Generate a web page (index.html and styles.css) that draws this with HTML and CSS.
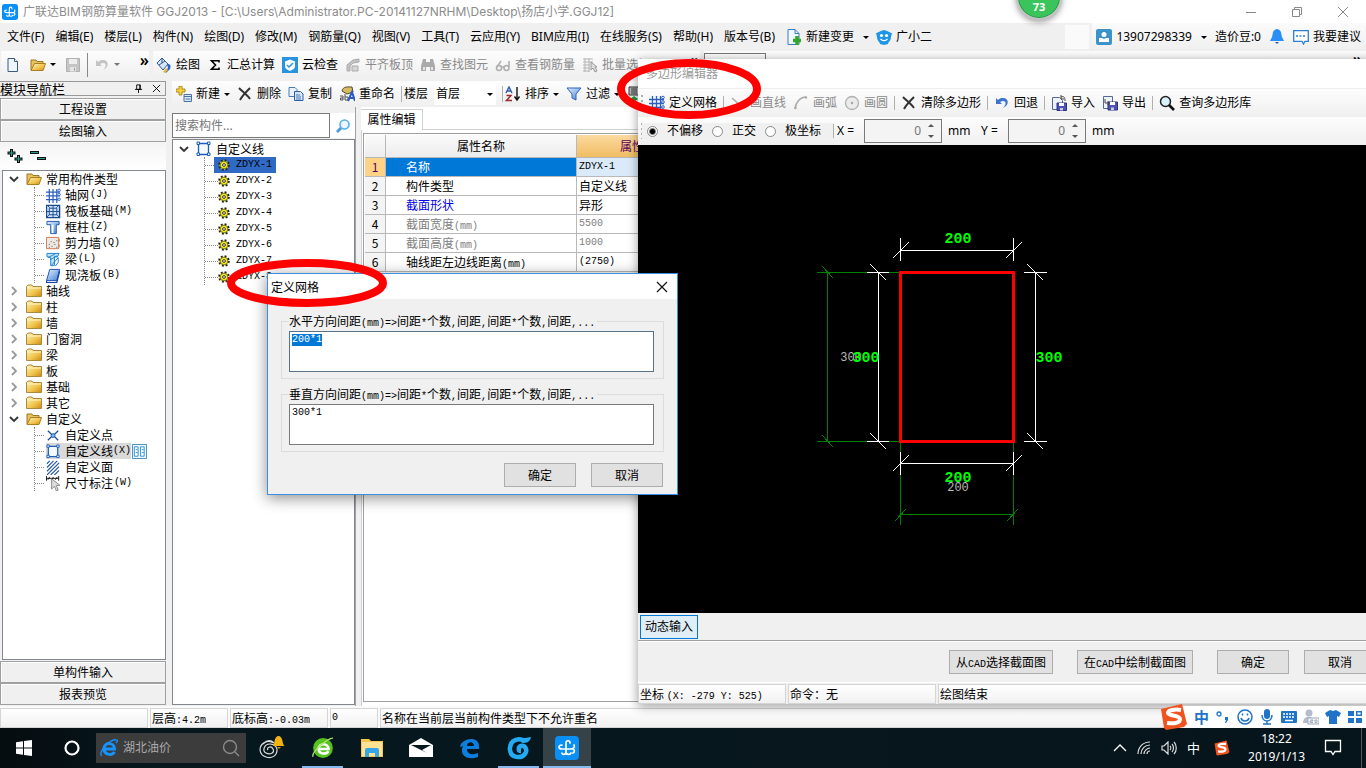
FILE: index.html
```html
<!DOCTYPE html>
<html lang="zh-CN">
<head>
<meta charset="utf-8">
<title>广联达BIM钢筋算量软件 GGJ2013</title>
<link rel="stylesheet" href="styles.css">
</head>
<body>
<svg class="defs" aria-hidden="true">
<defs>
<linearGradient id="gold" x1="0" y1="0" x2="1" y2="1"><stop offset="0" stop-color="#fff3b8"/><stop offset=".6" stop-color="#f1c24a"/><stop offset="1" stop-color="#c98912"/></linearGradient>
<linearGradient id="blu" x1="0" y1="0" x2="1" y2="1"><stop offset="0" stop-color="#e6f2ff"/><stop offset="1" stop-color="#3f7fd6"/></linearGradient>
<symbol id="logo" viewBox="0 0 24 24"><rect width="24" height="24" rx="4" fill="#0a8ff5"/><path d="M15 7c0-3-4-3-4 0v9c0 3-4 3-4 1M7 9c-4 0-4 4 0 4h10c3 0 3 3 1 4M11 16c0 3 4 3 5 1M15 13c4 0 5-2 4-4" fill="none" stroke="#fff" stroke-width="1.700" stroke-linecap="round"/></symbol>
<symbol id="new" viewBox="0 0 16 16"><path d="M3 1.500h6.500l3 3v10H3z" fill="#eef5fc" stroke="#3d5a80"/><path d="M9.500 1.500v3h3" fill="#fff" stroke="#3d5a80"/></symbol>
<symbol id="fopen" viewBox="0 0 16 16"><path d="M1 13V3h5l1 1.500h6V7" fill="#e8c25a" stroke="#9a7628"/><path d="M1 13.500 4.500 6.500H15.500L13 13.500z" fill="url(#gold)" stroke="#a87f22"/></symbol>
<symbol id="fold" viewBox="0 0 16 16"><path d="M.5 13.500v-10l1.500-1.500h4l1 1.500h8.500v10z" fill="url(#gold)" stroke="#a98a3e"/><path d="M1 5h14" stroke="#fff4c4"/></symbol>
<symbol id="save" viewBox="0 0 16 16"><path d="M1.500 1.500h13v13h-13z" fill="#c5c5c5" stroke="#b0b0b0"/><path d="M4 2h8v5H4z" fill="#eee"/><path d="M5 10h6v4.500H5z" fill="#e4e4e4"/><path d="M9 11h1v2.500H9z" fill="#999"/></symbol>
<symbol id="undo" viewBox="0 0 16 16"><path d="M2 3v6h6L6 7c5-3 8 1 3 6 7-3 6-11-1-10-2 0-3 1-4 2z" fill="currentColor"/></symbol>
<symbol id="paint" viewBox="0 0 16 16"><path d="M1 6 6 1l6 6-5 6z" fill="#d7e6f8" stroke="#31598f"/><path d="M3 8l6-4M6 1v5" stroke="#31598f"/><path d="M11 7c4 0 4 2 3 5l-4 4-1-2 3-3z" fill="#2667c9"/><path d="m7 15 3-4 2 2-3 3z" fill="#e8b93f"/></symbol>
<symbol id="sigma" viewBox="0 0 16 16"><path d="M12 5.500V3.700H4.500l4 4.300-4 4.300H12v-1.800" fill="none" stroke="#000" stroke-width="1.600"/></symbol>
<symbol id="cloud" viewBox="0 0 16 16"><path d="M0 0h16v16H0z" fill="#2a93dd"/><path d="M3 4.500 8 2.500l5 2V9c0 3-3 4-5 5-2-1-5-2-5-5z" fill="#fff"/><path d="m5 8 2 2 4-4" fill="none" stroke="#2a93dd" stroke-width="1.500"/></symbol>
<symbol id="align" viewBox="0 0 16 16"><path d="M2 8 8 3l6-1v3L8 6 5 9v5H2z" fill="#c3c3c3" stroke="#aaa"/><path d="M7 9h6v5H7z" fill="#d5d5d5" stroke="#aaa"/></symbol>
<symbol id="bino" viewBox="0 0 16 16"><path d="M3 2h3v3h4V2h3l2 7v5h-5v-4H6v4H1V9z" fill="#aaa"/><path d="M3 10h2v3H3zM11 10h2v3h-2z" fill="#e4e4e4"/></symbol>
<symbol id="glass" viewBox="0 0 16 16"><g fill="none" stroke="#b0b0b0" stroke-width="1.600"><circle cx="4" cy="11" r="2.500"/><circle cx="11.500" cy="11" r="2.500"/><path d="M6.500 10h2.500M2 10l4-6M14 10V4"/></g></symbol>
<symbol id="batch" viewBox="0 0 16 16"><path d="M1 2h10M1 5h10M1 8h7M1 11h7M1 14h7M3 1v14M7 1v14" stroke="#b5b5b5"/><path d="M9 5v8l2-2 2 4 2-1-2-4h2z" fill="#ddd" stroke="#999"/></symbol>
<symbol id="plusnew" viewBox="0 0 16 16"><path d="M3 0h3v3h3v3H6v3H3V6H0V3h3z" fill="#f6cf3a" stroke="#9c7b10" stroke-width=".8"/><path d="M8 8.500h7.500v7H8z" fill="#dce9f8" stroke="#49729f"/><path d="M8 10.500h7.500M9.500 13h5" stroke="#49729f"/></symbol>
<symbol id="x" viewBox="0 0 16 16"><path d="M2 2c4 4 8 7 11 11M13 2C9 6 5 10 3 14" fill="none" stroke="#333" stroke-width="2"/></symbol>
<symbol id="copy" viewBox="0 0 16 16"><path d="M1 1.500h6l2 2v7H1z" fill="#e9f2fd" stroke="#4c78b8"/><path d="M6.500 5.500h6l2.500 2.500v6.500H6.500z" fill="#d5e5fa" stroke="#2f5fa8"/><path d="M8 9h4M8 11h5M8 13h5" stroke="#4c78b8"/></symbol>
<symbol id="ren" viewBox="0 0 16 16"><path d="M3 5c1-5 6-4 10-4l1 5-6 2z" fill="#d6bb63" stroke="#554a28"/><path d="M1 10h3v4H1.500v-2H4M6 8v6h3v-3H6" fill="none" stroke="#555"/><path d="m9 15 4-9 3 9M11 12h4" fill="none" stroke="#2959c2" stroke-width="2"/></symbol>
<symbol id="az" viewBox="0 0 16 16"><path d="m1 7 3-6 3 6M2 5h4" fill="none" stroke="#315aa8" stroke-width="1.400"/><path d="M1.500 9.500H6l-4.500 5H7" fill="none" stroke="#9c2d2d" stroke-width="1.400"/><path d="M12 1v12M9.500 10.500 12 14l2.500-3.500" fill="none" stroke="#111" stroke-width="1.400"/></symbol>
<symbol id="fun" viewBox="0 0 16 16"><path d="M1 2h14L10 8v6l-4-2V8z" fill="url(#blu)" stroke="#2a63bd"/></symbol>
<symbol id="mag" viewBox="0 0 16 16"><path d="m6 10-4 4" stroke="#4a9be0" stroke-width="3"/><circle cx="9.500" cy="6.500" r="4.500" fill="#eaf6ff" stroke="#5aaeea" stroke-width="1.600"/></symbol>
<symbol id="pgup" viewBox="0 0 16 16"><path d="M2 1h10v8H2z" fill="#bbb" stroke="#333"/><path d="M4 3h6M4 5h6M4 7h6" stroke="#333"/><path d="m7 10 4 3-4 3-4-3z" fill="#1a9a3a"/></symbol>
<symbol id="grid" viewBox="0 0 16 16"><path d="M0 4.500h15M0 8.500h15M0 12.500h15M3.500 1v15M7.500 1v15M11.500 1v15" stroke="#2b5fbe" stroke-width="1.300"/><g fill="#fff" stroke="#2b5fbe"><circle cx="14" cy="2.500" r="1.300"/><circle cx="14" cy="7" r="1.300"/><circle cx="14" cy="12" r="1.300"/></g></symbol>
<symbol id="raft" viewBox="0 0 16 16"><path d="M.5 1.500h14v13H.5z" fill="#cfe3fb" stroke="#174a91" stroke-width="1.500"/><path d="M3.500 4.500h8v7h-8zM1 1l3 3M14 1l-3 3M1 14l3-3M14 14l-3-3M3.500 8h8M7.500 1v13M0 8h4M11 8h4" fill="none" stroke="#174a91"/></symbol>
<symbol id="col" viewBox="0 0 16 16"><path d="M1 1.500h13V5H11v9.500H5V5H1z" fill="url(#blu)" stroke="#1f57a8"/><path d="M7 5v9" stroke="#fff" stroke-width="2"/></symbol>
<symbol id="wall" viewBox="0 0 16 16"><path d="M.5 1.500h13v12H.5z" fill="#ece9e4" stroke="#d0784c"/><path d="M3 9h1m2 2h1m2-2h1m1 3h1M3 12h1m4-5h1m2-2h1M5 6h1" stroke="#555"/><path d="M14 3v3M14 9v3" stroke="#c2693c"/></symbol>
<symbol id="beam" viewBox="0 0 16 16"><path d="M1 1.500h13l-2 4-3-1v10H5V6L1 5z" fill="#bfe2fb" stroke="#197fca"/><path d="m2 6 8-4M5 8l7-4M6 14l7-8v5l-3 4" fill="none" stroke="#197fca"/></symbol>
<symbol id="slab" viewBox="0 0 16 16"><path d="M4 1.500h10.500l-3 12H.5z" fill="url(#blu)" stroke="#174aa5"/><path d="M.5 13.500v2h11l3-12" fill="none" stroke="#174aa5" stroke-width="1.400"/></symbol>
<symbol id="pt" viewBox="0 0 16 16"><path d="m2 3 4 4M13 3 9 7M2 13l4-4M13 13 9 9" stroke="#1f4f9d" stroke-width="1.400"/><circle cx="7.500" cy="8" r="2" fill="#7ac0ff" stroke="#1f4f9d"/></symbol>
<symbol id="poly" viewBox="0 0 16 16"><path d="M2.500 2.500h10v11h-10z" fill="#f4f8ff" stroke="#1c5dc0" stroke-width="1.300"/><g fill="#fff" stroke="#1c5dc0"><path d="M1 1h2.500v2.500H1zM11.500 1H14v2.500h-2.500zM1 12h2.500v2.500H1zM11.500 12H14v2.500h-2.500z"/></g></symbol>
<symbol id="hatch" viewBox="0 0 16 16"><path d="m1 4 3-3M1 8l7-7M1 12l11-11M1 16 14 3M5 16l9-9M9 16l5-5" stroke="#24579f" stroke-width="1.200"/></symbol>
<symbol id="dim" viewBox="0 0 16 16"><path d="M.5 0v5M13.500 0v5M1 2.500h12M4 1l-2 3M8 1l-2 3M12 1l-2 3" stroke="#111"/><path d="M6 3v11l3-3 2 5 2-1-2-5h4z" fill="#ddd" stroke="#888"/></symbol>
<symbol id="book" viewBox="0 0 16 16"><path d="M.5.5h15v15H.5z" fill="#eff8ff" stroke="#3d8bbb"/><path d="M2.500 3h4v10h-4zM9 3h4v10H9zM4 6h2M4 9h2M10.500 6h2M10.500 9h2" fill="#fff" stroke="#2c8ed0"/></symbol>
<symbol id="gear" viewBox="0 0 12 12"><circle cx="6" cy="6" r="4.600" fill="#f5ee14" stroke="#222" stroke-width="2.400" stroke-dasharray="1.800 1.813"/><circle cx="6" cy="6" r="3.800" fill="#f5ee14" stroke="#554" stroke-width=".7"/><circle cx="6" cy="6" r="1.400" fill="#fff" stroke="#222" stroke-width=".9"/></symbol>
<symbol id="arrd" viewBox="0 0 10 8"><path d="m1 2 4 4 4-4" fill="none" stroke="#333" stroke-width="1.800"/></symbol>
<symbol id="arrr" viewBox="0 0 10 10"><path d="m3 1 4 4-4 4" fill="none" stroke="#999" stroke-width="1.800"/></symbol>
<symbol id="line" viewBox="0 0 16 16"><path d="m2 3 11 10" stroke="#aaa" stroke-width="1.500"/></symbol>
<symbol id="arc" viewBox="0 0 16 16"><path d="M2 14C3 6 8 2 13 2" fill="none" stroke="#aaa" stroke-width="1.500"/><circle cx="2.500" cy="13" r="1.200" fill="#aaa"/><circle cx="13" cy="2.500" r="1.200" fill="#aaa"/></symbol>
<symbol id="circ" viewBox="0 0 16 16"><circle cx="8" cy="8" r="6.500" fill="#ececec" stroke="#b0b0b0" stroke-width="1.300"/><circle cx="8" cy="8" r="1.300" fill="#aaa"/></symbol>
<symbol id="imp" viewBox="0 0 16 16"><path d="M1.500 2.500h7l3 3v9h-10z" fill="#eef3fb" stroke="#546a94"/><path d="M6 8h9.500v7.500H6z" fill="#4c53b5" stroke="#2c3180"/><path d="M8 8h5v3H8z" fill="#fff"/><path d="M9 13h3v2.500H9z" fill="#ccd"/><path d="M10 2c3-1 4 0 4 4M10 0v4h3" fill="none" stroke="#444"/></symbol>
<symbol id="exp" viewBox="0 0 16 16"><path d="M1.500 1.500h9v12h-9z" fill="#eef3fb" stroke="#546a94"/><path d="M6 7h9.500v8H6z" fill="#4c53b5" stroke="#2c3180"/><path d="M8 7h5v3H8z" fill="#fff"/><path d="M9 12.500h3V15H9z" fill="#ccd"/><path d="M3 4v4h4M5.500 6l2 2-2 2" fill="none" stroke="#444"/></symbol>
<symbol id="find" viewBox="0 0 16 16"><circle cx="6.500" cy="6.500" r="5" fill="#d9f3fa" stroke="#222" stroke-width="1.500"/><path d="m10 10 5 5" stroke="#111" stroke-width="2.600"/></symbol>
<symbol id="sogou" viewBox="0 0 28 28"><path d="m1 6 21-5 5 20-3 3-18 3-2-2z" fill="#f0541e"/><path d="M21 7c-6-1-13 0-13 3s12 2 12 6-6 5-13 4" fill="none" stroke="#fff" stroke-width="4"/></symbol>
<symbol id="ie" viewBox="0 0 20 20"><path d="M6 11h9.500c0-7-10-7-10.500-1-.5 7 8 8 10.500 4" fill="none" stroke="currentColor" stroke-width="3"/><path d="M3 18C-2 15 11 0 18 2c1 1 0 2-1 3" fill="none" stroke="currentColor" stroke-width="1.300"/></symbol>
</defs>
</svg>

<div class="screen">
<header class="titlebar">
  <svg class="i16"><use href="#logo"/></svg>
  <h1>广联达BIM钢筋算量软件 GGJ2013 - [C:\Users\Administrator.PC-20141127NRHM\Desktop\扬店小学.GGJ12]</h1>
  <div class="winbtns">
    <button aria-label="最小化"><svg viewBox="0 0 12 12"><path d="M1 6.500h10"/></svg></button>
    <button aria-label="还原"><svg viewBox="0 0 12 12"><path d="M1.500 3.500h7v7h-7zM3.500 3V1.500h7v7H9"/></svg></button>
    <button aria-label="关闭"><svg viewBox="0 0 12 12"><path d="m1 1 10 10M11 1 1 11"/></svg></button>
  </div>
</header>

<nav class="menubar">
  <button>文件(F)</button><button>编辑(E)</button><button>楼层(L)</button><button>构件(N)</button><button>绘图(D)</button><button>修改(M)</button><button>钢筋量(Q)</button><button>视图(V)</button><button>工具(T)</button><button>云应用(Y)</button><button>BIM应用(I)</button><button>在线服务(S)</button><button>帮助(H)</button><button>版本号(B)</button>
  <button class="tb"><svg class="i16" viewBox="0 0 16 16"><path d="M2 .5h7l4 4v11H2z" fill="#eff7ff" stroke="#3b7fbf"/><path d="M9 .5v4h4" fill="none" stroke="#3b7fbf"/><path d="M11 7v9M7 11.500h8" stroke="#35a629" stroke-width="3.500"/></svg>新建变更<i class="car"></i></button>
  <button class="tb"><svg class="i16" viewBox="0 0 16 16"><path d="M0 4c2 0 3-2 8-3 5 1 6 3 8 3l-1 4c0 4-3 5-3 7l-4 1-4-1c0-2-3-3-3-7z" fill="#1e96e8"/><circle cx="5.500" cy="6.500" r="1.600" fill="#fff"/><circle cx="10.500" cy="6.500" r="1.600" fill="#fff"/><path d="M4.500 10c2 2 5 2 7 0" fill="none" stroke="#fff" stroke-width="1.300"/></svg>广小二</button>
  <div class="stub"></div>
  <div class="account">
    <button class="tb"><svg class="i16" viewBox="0 0 16 16"><rect width="16" height="16" rx="2" fill="#3b93c9"/><circle cx="8" cy="5.500" r="2.500" fill="#fff"/><path d="M3 13V9h3l2 1 2-1h3v4z" fill="#fff"/></svg>13907298339<i class="car"></i></button>
    <span>造价豆:0</span>
    <button aria-label="通知"><svg class="i16" viewBox="0 0 16 16"><path d="M8 0c5 1 4 5 5 8l2 4H1l2-4C4 5 3 1 8 0z" fill="#2a8ff7"/><path d="M6 13h4l-2 2z" fill="#1a5fb4"/></svg></button>
    <button class="tb"><svg class="i16" viewBox="0 0 16 16"><path d="M.7 1.700h14.600v10.600H12L10.500 15 9 12.300H.7z" fill="#fff" stroke="#2a7fd6" stroke-width="1.300"/><path d="M3 7h10" stroke="#2a7fd6" stroke-width="1.500" stroke-dasharray="2 1.500"/></svg>我要建议</button>
  </div>
</nav>

<div class="toolbars">
  <div class="bar file">
    <button aria-label="新建"><svg class="i16"><use href="#new"/></svg></button>
    <button class="tb" aria-label="打开"><svg class="i16"><use href="#fopen"/></svg><i class="car"></i></button>
    <button aria-label="保存"><svg class="i16"><use href="#save"/></svg></button>
    <i class="sep"></i>
    <button class="tb off" aria-label="撤销"><svg class="i16"><use href="#undo"/></svg><i class="car"></i></button>
    <b class="more">»</b>
  </div>
  <div class="bar draw">
    <button class="tb"><svg class="i16"><use href="#paint"/></svg>绘图</button>
    <button class="tb"><svg class="i16"><use href="#sigma"/></svg>汇总计算</button>
    <button class="tb"><svg class="i16"><use href="#cloud"/></svg>云检查</button>
    <button class="tb off"><svg class="i16"><use href="#align"/></svg>平齐板顶</button>
    <button class="tb off"><svg class="i16"><use href="#bino"/></svg>查找图元</button>
    <button class="tb off"><svg class="i16"><use href="#glass"/></svg>查看钢筋量</button>
    <button class="tb off"><svg class="i16"><use href="#batch"/></svg>批量选择</button>
    <b class="more">»</b>
  </div>
  <div class="bar views">
    <button class="viewbox" aria-label="视图"></button>
    <b class="more">»</b>
  </div>
</div>

<main class="work">
  <aside class="nav">
    <h2 class="navhead">模块导航栏<span><svg viewBox="0 0 10 10"><path d="M3 1h4v5H3zM1 6h8M5 6v4M6.500 1v5"/></svg><svg viewBox="0 0 10 10"><path d="m1 1 8 8M9 1 1 9"/></svg></span></h2>
    <button class="navbtn">工程设置</button>
    <button class="navbtn">绘图输入</button>
    <div class="navtools"><button aria-label="展开"><svg viewBox="0 0 16 16"><path d="M4.500 1v8M.5 5h8M11.500 7v8M7.500 11h8" stroke="#111" stroke-width="3"/><path d="M4.500 2v6M1.500 5h6M11.500 8v6M8.500 11h6" stroke="#2b9c8c"/></svg></button><button aria-label="折叠"><svg viewBox="0 0 16 16"><path d="M0 4.500h9M7 10.500h9" stroke="#111" stroke-width="3"/><path d="M1 4.500h7M8 10.500h7" stroke="#2b9c8c"/></svg></button></div>
    <ul class="tree types">
      <li><span class="row"><svg class="ar"><use href="#arrd"/></svg><svg class="i16"><use href="#fopen"/></svg>常用构件类型</span>
        <ul class="kids">
          <li><svg class="i16"><use href="#grid"/></svg>轴网<span class="m">(J)</span></li>
          <li><svg class="i16"><use href="#raft"/></svg>筏板基础<span class="m">(M)</span></li>
          <li><svg class="i16"><use href="#col"/></svg>框柱<span class="m">(Z)</span></li>
          <li><svg class="i16"><use href="#wall"/></svg>剪力墙<span class="m">(Q)</span></li>
          <li><svg class="i16"><use href="#beam"/></svg>梁<span class="m">(L)</span></li>
          <li><svg class="i16"><use href="#slab"/></svg>现浇板<span class="m">(B)</span></li>
        </ul></li>
      <li><span class="row"><svg class="ar"><use href="#arrr"/></svg><svg class="i16"><use href="#fold"/></svg>轴线</span></li>
      <li><span class="row"><svg class="ar"><use href="#arrr"/></svg><svg class="i16"><use href="#fold"/></svg>柱</span></li>
      <li><span class="row"><svg class="ar"><use href="#arrr"/></svg><svg class="i16"><use href="#fold"/></svg>墙</span></li>
      <li><span class="row"><svg class="ar"><use href="#arrr"/></svg><svg class="i16"><use href="#fold"/></svg>门窗洞</span></li>
      <li><span class="row"><svg class="ar"><use href="#arrr"/></svg><svg class="i16"><use href="#fold"/></svg>梁</span></li>
      <li><span class="row"><svg class="ar"><use href="#arrr"/></svg><svg class="i16"><use href="#fold"/></svg>板</span></li>
      <li><span class="row"><svg class="ar"><use href="#arrr"/></svg><svg class="i16"><use href="#fold"/></svg>基础</span></li>
      <li><span class="row"><svg class="ar"><use href="#arrr"/></svg><svg class="i16"><use href="#fold"/></svg>其它</span></li>
      <li><span class="row"><svg class="ar"><use href="#arrd"/></svg><svg class="i16"><use href="#fopen"/></svg>自定义</span>
        <ul class="kids">
          <li><svg class="i16"><use href="#pt"/></svg>自定义点</li>
          <li><span class="cur"><svg class="i16"><use href="#poly"/></svg>自定义线<span class="m">(X)</span></span><svg class="i16 bk"><use href="#book"/></svg></li>
          <li><svg class="i16"><use href="#hatch"/></svg>自定义面</li>
          <li><svg class="i16"><use href="#dim"/></svg>尺寸标注<span class="m">(W)</span></li>
        </ul></li>
    </ul>
    <button class="navbtn">单构件输入</button>
    <button class="navbtn">报表预览</button>
  </aside>

  <section class="content">
    <div class="bar comp">
      <button class="tb"><svg class="i16"><use href="#plusnew"/></svg>新建<i class="car"></i></button>
      <button class="tb"><svg class="i16"><use href="#x"/></svg>删除</button>
      <button class="tb"><svg class="i16"><use href="#copy"/></svg>复制</button>
      <button class="tb"><svg class="i16"><use href="#ren"/></svg>重命名</button>
      <i class="sep"></i>
      <label class="lbl" for="floor">楼层</label>
      <span class="floor"><select id="floor"><option>首层</option></select><i class="car"></i></span>
      <i class="sep"></i>
      <button class="tb"><svg class="i16"><use href="#az"/></svg>排序<i class="car"></i></button>
      <button class="tb"><svg class="i16"><use href="#fun"/></svg>过滤<i class="car"></i></button>
      <button class="tb" aria-label="从其他楼层复制构件"><svg class="i16"><use href="#pgup"/></svg></button>
    </div>
    <div class="cols">
      <div class="list">
        <div class="search"><input type="text" placeholder="搜索构件..." aria-label="搜索构件"><button aria-label="搜索"><svg class="i16"><use href="#mag"/></svg></button></div>
        <ul class="tree comps">
          <li><span class="row"><svg class="ar"><use href="#arrd"/></svg><svg class="i16"><use href="#poly"/></svg>自定义线</span>
            <ul class="kids m">
              <li><span class="cur"><svg class="g"><use href="#gear"/></svg>ZDYX-1</span></li>
              <li><svg class="g"><use href="#gear"/></svg>ZDYX-2</li>
              <li><svg class="g"><use href="#gear"/></svg>ZDYX-3</li>
              <li><svg class="g"><use href="#gear"/></svg>ZDYX-4</li>
              <li><svg class="g"><use href="#gear"/></svg>ZDYX-5</li>
              <li><svg class="g"><use href="#gear"/></svg>ZDYX-6</li>
              <li><svg class="g"><use href="#gear"/></svg>ZDYX-7</li>
              <li><svg class="g"><use href="#gear"/></svg>ZDYX-8</li>
            </ul></li>
        </ul>
      </div>
      <div class="props">
        <div class="tabs"><button>属性编辑</button></div>
        <div class="page"><div class="sheet">
          <table>
            <colgroup><col class="c1"><col class="c2"><col></colgroup>
            <thead><tr><th></th><th>属性名称</th><th class="hot"><span>属性值</span></th></tr></thead>
            <tbody>
              <tr class="on"><th>1</th><td>名称</td><td class="m">ZDYX-1</td></tr>
              <tr><th>2</th><td>构件类型</td><td>自定义线</td></tr>
              <tr><th>3</th><td class="key">截面形状</td><td>异形</td></tr>
              <tr class="dimd"><th>4</th><td>截面宽度<span class="m">(mm)</span></td><td class="m">5500</td></tr>
              <tr class="dimd"><th>5</th><td>截面高度<span class="m">(mm)</span></td><td class="m">1000</td></tr>
              <tr><th>6</th><td>轴线距左边线距离<span class="m">(mm)</span></td><td class="m">(2750)</td></tr>
            </tbody>
          </table>
        </div></div>
      </div>
    </div>
  </section>
</main>

<footer class="status">
  <span class="s1"></span><span class="s2">层高<span class="m">:4.2m</span></span><span class="s3">底标高<span class="m">:-0.03m</span></span><span class="s4 m">0</span><span class="s5">名称在当前层当前构件类型下不允许重名</span>
</footer>

<div class="taskbar">
  <button aria-label="开始"><svg width="16" height="16" viewBox="0 0 16 16"><path d="M0 2.300 7 1.300v6.300H0zM8 1.100 16 0v7.600H8zM0 8.500h7v6.300l-7-1zM8 8.500h8V16l-8-1.100z" fill="#fff"/></svg></button>
  <button aria-label="Cortana"><svg width="16" height="16" viewBox="0 0 16 16"><circle cx="8" cy="8" r="6.500" fill="none" stroke="#fff" stroke-width="2.200"/></svg></button>
  <label class="find"><svg class="eb"><use href="#ie"/></svg><input type="text" value="湖北油价" aria-label="搜索网页"><svg width="18" height="18" viewBox="0 0 18 18"><g fill="none" stroke="#8a8a8a" stroke-width="1.400"><circle cx="8" cy="8" r="6.500"/><path d="m13 13 4 4"/></g></svg></label>
  <button aria-label="助手"><svg width="28" height="28" viewBox="0 0 28 28"><path d="M16 9C10 5 2 9 2 16c1 8 12 10 16 4 3-6-1-10-6-10-6 0-8 7-4 9s9 0 7-4-7-1-5 1M5 10c4-4 8-4 11-1" fill="none" stroke="#ddd" stroke-width="1.200"/><path d="M15 12c1-1 1-2 1.500-5 .5-3 2-5 4-5s3.500 2 4 5c.5 3 1 4 2 5z" fill="#f0b40c"/><path d="M19 13h4l-2 2z" fill="#d08a00"/></svg></button>
  <button class="run g360" aria-label="360浏览器"><svg width="22" height="22" viewBox="0 0 20 20"><circle cx="10" cy="10" r="9" fill="#57c21d"/><path d="M6 11h9c0-6-9-6-9 0 0 5 7 5 9 2" fill="none" stroke="#fff" stroke-width="2.300"/><path d="M1 18C-1 14 14 1 19 1" fill="none" stroke="#a5e26b" stroke-width="1.300"/></svg></button>
  <button aria-label="文件资源管理器"><svg width="22" height="20" viewBox="0 0 22 20"><path d="M0 1h8l2 2h12v16H0z" fill="#f6c64d"/><path d="M1 4h20v14H1z" fill="#ffe294"/><path d="M4 19v-7q0-2 2-2h10q2 0 2 2v7h-4v-4H8v4z" fill="#35a6e6"/></svg></button>
  <button aria-label="邮件"><svg width="24" height="20" viewBox="0 0 24 20"><path d="M0 7 12 0l12 7v12H0z" fill="#fff"/><path d="M2 7h20l-9 5 5 3z" fill="#06161c"/></svg></button>
  <button class="edge" aria-label="Edge"><svg width="22" height="22" viewBox="0 0 22 22"><path d="M1 10C2 1 20-2 20 9v3H8c0 6 7 6 11 4v4C7 24 0 17 4 9c-1 0-2 1-3 1zm7-1h7c0-5-7-5-7 0z" fill="currentColor"/></svg></button>
  <button class="run" aria-label="广联达G"><svg width="26" height="26" viewBox="0 0 26 26"><path d="M17 5C9 2 3 8 4 15c1 8 11 9 15 4 3-4 0-9-4-8-3 1-3 5 0 5" fill="none" stroke="#24a9f4" stroke-width="4.500"/><path d="M13 3c4 0 8 0 12-1-1 5-4 6-9 6z" fill="#24a9f4"/></svg></button>
  <button class="run now" aria-label="GGJ2013"><svg width="24" height="24"><use href="#logo"/></svg></button>
  <div class="tray">
    <svg width="14" height="14" viewBox="0 0 14 14"><path d="m1 10 6-6 6 6" fill="none" stroke="#fff" stroke-width="1.300"/></svg>
    <svg width="14" height="14" viewBox="0 0 14 14"><path d="M1 13C1 6 6 1 13 1M4 13c0-5 4-9 9-9M7 13c0-3 3-6 6-6M10 13c0-2 1-3 3-3" fill="none" stroke="#ddd" stroke-width="1.200"/></svg>
    <svg width="16" height="14" viewBox="0 0 16 14"><path d="M1 5h2l4-4v12L3 9H1zM9 5c1 1 1 3 0 4M11 3c2 2 2 6 0 8M13 1c3 3 3 9 0 12" fill="none" stroke="#ddd" stroke-width="1.200"/></svg>
    <span class="zh">中</span>
    <svg width="16" height="16"><use href="#sogou"/></svg>
    <time>18:22<br>2019/1/13</time>
    <svg width="18" height="18" viewBox="0 0 18 18"><path d="M1.500 1.500h15v11H11l-2 3-2-3H1.500z" fill="none" stroke="#fff" stroke-width="1.300"/></svg>
    <i class="desk"></i>
  </div>
</div>

<section class="editor">
  <h2>多边形编辑器</h2>
  <div class="bar">
    <i class="grip"></i>
    <button class="tb"><svg class="i16"><use href="#grid"/></svg>定义网格</button><i class="sep"></i>
    <button class="tb off"><svg class="i16"><use href="#line"/></svg>画直线</button>
    <button class="tb off"><svg class="i16"><use href="#arc"/></svg>画弧</button>
    <button class="tb off"><svg class="i16"><use href="#circ"/></svg>画圆</button><i class="sep"></i>
    <button class="tb"><svg class="i16"><use href="#x"/></svg>清除多边形</button><i class="sep"></i>
    <button class="tb"><svg class="i16 back"><use href="#undo"/></svg>回退</button><i class="sep"></i>
    <button class="tb"><svg class="i16"><use href="#imp"/></svg>导入</button>
    <button class="tb"><svg class="i16"><use href="#exp"/></svg>导出</button><i class="sep"></i>
    <button class="tb"><svg class="i16"><use href="#find"/></svg>查询多边形库</button>
  </div>
  <div class="bar opts">
    <i class="grip"></i>
    <div class="radios">
      <label><input type="radio" name="off" checked>不偏移</label>
      <label><input type="radio" name="off">正交</label>
      <label><input type="radio" name="off">极坐标</label>
    </div>
    <i class="sep"></i>
    <label class="co" for="ox">X =</label><span class="spin"><input id="ox" type="text" value="0"><span><button aria-label="X 增加"></button><button class="dn" aria-label="X 减少"></button></span></span><span class="mm">mm</span>
    <label class="co" for="oy">Y =</label><span class="spin"><input id="oy" type="text" value="0"><span><button aria-label="Y 增加"></button><button class="dn" aria-label="Y 减少"></button></span></span><span class="mm">mm</span>
  </div>
  <div class="canvas">
    <svg width="728" height="468" viewBox="638 145 728 468">
      <g stroke="#008000" fill="none" shape-rendering="crispEdges">
        <path d="M827.500 272v170M817 272.500h83M817 441.500h83M900.500 442v83M1013.500 442v83M900 514.500h114"/>
        <path d="m822 266 11 12M822 435l11 12M895 521l11-12M1007 521l11-12"/>
      </g>
      <g stroke="#fff" fill="none" shape-rendering="crispEdges">
        <path d="M900 250.500h114M900.500 238v23M1013.500 238v23M878.500 272v170M867 272.500h22M867 441.500h22M1035.500 272v170M1024 272.500h23M1024 441.500h23M900 463.500h114M900.500 452v23M1013.500 452v23"/>
        <path d="m893 258 16-16M1006 258l16-16M870 264l16 16M870 433l16 16M1027 264l16 16M1027 433l16 16M893 471l16-16M1006 471l16-16"/>
      </g>
      <rect x="900.500" y="272.500" width="113" height="169" fill="none" stroke="#f00" stroke-width="3"/>
      <g class="ref"><text x="851" y="361">300</text><text x="958" y="491">200</text></g>
      <g class="dims"><text x="958" y="243">200</text><text x="866" y="362">300</text><text x="1049" y="362">300</text><text x="958" y="482">200</text></g>
    </svg>
  </div>
  <div class="dyn"><button>动态输入</button></div>
  <div class="acts"><button class="pb">从<span class="m">CAD</span>选择截面图</button><button class="pb">在<span class="m">CAD</span>中绘制截面图</button><div><button class="pb w">确定</button><button class="pb w">取消</button></div></div>
  <div class="est"><span>坐标 <span class="m">(X: -279 Y: 525)</span></span><span>命令：无</span><span>绘图结束</span></div>
</section>

<form class="dialog" role="dialog" aria-labelledby="dt">
  <header><h2 id="dt">定义网格</h2><button type="button" aria-label="关闭"><svg width="12" height="12" viewBox="0 0 12 12"><path d="m1 1 10 10M11 1 1 11" stroke="#111" stroke-width="1.200"/></svg></button></header>
  <fieldset><legend><label for="h">水平方向间距<span class="m">(mm)=&gt;</span>间距<span class="m">*</span>个数<span class="m">,</span>间距<span class="m">,</span>间距<span class="m">*</span>个数<span class="m">,</span>间距<span class="m">,...</span></label></legend><textarea id="h" class="m">200*1</textarea></fieldset>
  <fieldset><legend><label for="v">垂直方向间距<span class="m">(mm)=&gt;</span>间距<span class="m">*</span>个数<span class="m">,</span>间距<span class="m">,</span>间距<span class="m">*</span>个数<span class="m">,</span>间距<span class="m">,...</span></label></legend><textarea id="v" class="m">300*1</textarea></fieldset>
  <div class="dbtn"><button type="button" class="pb w">确定</button><button type="button" class="pb w">取消</button></div>
</form>

<div class="ime">
  <svg class="big"><use href="#sogou"/></svg>
  <b>中</b>
  <svg viewBox="0 0 16 16"><circle cx="4" cy="5" r="2" fill="none" stroke="#1f73c9" stroke-width="1.300"/><path d="M10 8h3v3l-2 3h-1l1-3h-1z" fill="#1f73c9"/></svg>
  <svg viewBox="0 0 16 16"><circle cx="8" cy="8" r="7" fill="none" stroke="#1f73c9" stroke-width="1.500"/><path d="M5.500 4.500v2M10.500 4.500v2M4 9c1 4 7 4 8 0" fill="none" stroke="#1f73c9" stroke-width="1.500"/></svg>
  <svg viewBox="0 0 16 16"><rect x="5" y="0" width="6" height="10" rx="3" fill="#1f73c9"/><path d="M3 6c0 8 10 8 10 0M8 12v3M4 15h8" fill="none" stroke="#1f73c9" stroke-width="1.500"/></svg>
  <svg viewBox="0 0 16 16"><rect y="2" width="16" height="12" rx="1" fill="#1f73c9"/><path d="M2 5h12M2 8h12" stroke="#fff" stroke-width="1.500" stroke-dasharray="2 1"/><path d="M4 11.500h8" stroke="#fff" stroke-width="1.500"/></svg>
  <svg viewBox="0 0 16 16"><circle cx="6" cy="4" r="3.500" fill="#b3bccb"/><path d="M0 14c0-8 10-8 12-1v1z" fill="#b3bccb"/><rect x="5" y="9" width="11" height="6" fill="#fff" stroke="#9aa6bb"/><path d="M7 11h3v1H7v1.500h3M12 11h2v2.500h-2z" fill="none" stroke="#9aa6bb"/></svg>
  <svg viewBox="0 0 16 16"><path d="m5 1 3 1 3-1 5 3-2 4-2-1v8H4V7L2 8 0 4z" fill="#1f73c9"/></svg>
  <svg viewBox="0 0 16 16"><path d="M1 2h6v5H1zM1 9h6v5H1zM9 9h6v5H9z" fill="#1f73c9"/><path d="M9.700 2.700h4.600v3.600H9.700z" fill="none" stroke="#1f73c9" stroke-width="1.400"/></svg>
</div>

<div class="ball">73</div>
<svg class="marks"><ellipse cx="689" cy="89" rx="68" ry="26"/><ellipse cx="307" cy="283" rx="76" ry="20"/></svg>
</div>
<script src="app.js"></script>
</body>
</html>
```
FILE: styles.css
```css
*{box-sizing:border-box}
body{margin:0;font:12px/16px "Noto Sans","Noto Sans CJK SC",sans-serif;color:#000}
button,input,select,textarea{font:inherit;color:inherit;margin:0;padding:0;border:0;background:none;border-radius:0}
button{white-space:nowrap}
h1,h2{margin:0;font:inherit}
ul{list-style:none;margin:0;padding:0}
svg{display:block;flex:none}
.defs{position:absolute;width:0;height:0}
.i16{width:16px;height:16px}
.m{font-family:"Liberation Mono","Noto Sans CJK SC",monospace;font-size:10px}
span.m{line-height:10px}
.screen{position:relative;display:flex;flex-direction:column;height:100vh;min-height:600px;overflow:hidden;background:#f0f0f0}

.titlebar{display:flex;align-items:center;height:23px;flex:none;background:#fff;padding-left:2px;gap:5px;color:#8c8c8c}
.titlebar h1{flex:1;white-space:nowrap;font-family:Inter,"Noto Sans CJK SC",sans-serif}
.winbtns{display:flex}
.winbtns button{width:46px;display:flex;justify-content:center}
.winbtns svg{width:12px;height:12px;fill:none;stroke:#888}

.menubar{display:flex;align-items:center;height:28px;flex:none;padding-left:7px;gap:11px;white-space:nowrap}
.tb{display:flex;align-items:center;gap:4px}
.off{color:#8a8a8a}
.off .i16{color:#c4c4c4}
.car{border:3px solid transparent;border-top-color:#000;border-bottom:0;width:0;height:0;flex:none}
.off .car{border-top-color:#777}
.menubar .car{margin-left:5px}
.menubar>.tb{margin-right:-4px}
.stub{width:24px;height:24px;background:#fafafa;margin-left:auto}
.account{display:flex;align-items:center;gap:8px;height:28px;margin-left:-8px;padding:0 5px 0 4px;background:linear-gradient(#fbfbfb,#efefef)}

.toolbars{display:flex;height:27px;flex:none;gap:4px;padding-left:1px}
.bar{display:flex;align-items:center;gap:7px;background:linear-gradient(#fdfdfd,#efefef);white-space:nowrap}
.sep{width:1px;height:14px;background:#b0b0b0;flex:none}
.bar.file{width:148px;padding-left:4px;gap:9px}
.file .sep{height:24px;background:#888;margin:0 -3px}
.more{font-size:16px;line-height:16px;margin-bottom:10px;font-weight:600}
.file .more{margin-left:auto}
.draw{padding-left:3px;width:547px}
.draw .more{margin-left:auto}
.views{flex:1;justify-content:space-between;align-items:flex-start;padding-right:4px}
.viewbox{width:62px;height:24px;border:1px solid #777;margin-top:2px}

.work{display:flex;flex:1;min-height:0;gap:6px}
.nav{width:166px;display:flex;flex-direction:column;padding:3px 0 1px;font-family:"Noto Sans CJK SC",sans-serif}
.navhead{display:flex;justify-content:space-between;align-items:center;height:15px;border:1px solid #999;border-left:0;font-size:13px;line-height:13px;margin-bottom:2px}
.navhead span{display:flex;gap:9px;padding-right:4px}
.navhead svg{width:9px;height:9px;fill:none;stroke:#000}
.navbtn{height:22px;flex:none;border:1px solid #a0a0a0;background:#f0f0f0;box-shadow:inset 1px 1px #fff}
.navtools{display:flex;align-items:center;gap:7px;height:28px;flex:none;padding-left:7px;background:linear-gradient(#f4f4f4,#fff)}
.navtools svg{width:16px;height:16px}
.tree{background:#fff;border:1px solid #828790;flex:1;min-height:0;overflow:hidden;font-family:"Noto Sans CJK SC",sans-serif}
.types{margin-left:2px;margin-bottom:1px}
.tree li,.row{line-height:16px}
.row{display:flex;align-items:center;height:16px;padding-left:6px;gap:4px;white-space:nowrap}
.row .ar{width:10px;height:10px;margin-right:3px}
.kids{margin-left:31px}
.types .kids{border-left:1px dotted #888}
.kids li{display:flex;align-items:center;height:16px;gap:4px;white-space:nowrap}
.kids li::before{content:"";width:9px;border-top:1px dotted #888;margin-right:-2px}
.kids .m{margin-left:-3px}
.kids .i16{width:15px;height:15px}
.cur{display:flex;align-items:center;gap:4px;height:16px;background:#d9d9d9}
.types .cur .m{margin-left:-4px}
.types .bk{margin-left:-3px}

.content{flex:1;min-width:0;display:flex;flex-direction:column;padding-top:3px}
.comp{height:26px;flex:none;padding-left:4px;overflow:hidden}
.comp .sep{height:16px;margin:0 -1px}
.comp .sep+*{margin-left:-4px}
.lbl{margin-right:-1px}
.floor{display:flex;align-items:center;background:#fff;width:62px;height:22px;padding-right:3px}
.floor select{appearance:none;flex:1;min-width:0;padding-left:2px}
.cols{display:flex;flex:1;min-height:0;gap:5px}
.list{width:184px;display:flex;flex-direction:column;padding:6px 0 1px;border-right:1px solid #a0a0a0}
.search{display:flex;height:25px;flex:none;background:#fff;margin-bottom:1px}
.search input{width:158px;border:1px solid #7a7a7a;padding:0 2px;background:#fff}
.search input::placeholder{color:#767676;opacity:1}
.search button{flex:1;display:flex;justify-content:center;align-items:center}
.comps .row{padding-left:6px;margin-top:1px}
.comps .kids{margin-left:31px;border-left:1px dotted #888}
.comps .kids li::before{width:13px}
.kids.m li{gap:2px}
.g{width:12px;height:12px;margin-right:4px}
.comps .cur{background:#316ac5;gap:2px;padding:0 4px;margin-left:-4px}

.props{flex:1;min-width:0;display:flex;flex-direction:column;padding-top:2px;background:#fff}
.tabs{height:21px;border-bottom:1px solid #d0d0d0;display:flex}
.tabs button{width:62px;height:21px;background:#fff;border-right:1px solid #d0d0d0;border-top:1px solid #d0d0d0}
.page{flex:1;min-height:0;padding:3px 0 4px 1px;border-left:1px solid #d0d0d0}
.sheet{height:100%;border:1px solid #a0a0a0;padding:1px}
table{border-collapse:separate;border-spacing:0;table-layout:fixed;width:100%;font-family:"Noto Sans CJK SC",sans-serif}
.c1{width:21px}.c2{width:191px}
th,td{height:19px;padding:0;border-right:1px solid #b8b8b8;border-bottom:1px solid #b8b8b8;text-align:left;font-weight:400;line-height:16px;white-space:nowrap}
thead th{height:23px;text-align:center;background:linear-gradient(#fbfbfb,#ececec)}
tbody th{text-align:center;background:#f4f4f4}
td{padding-left:2px}
td:nth-child(2){padding-left:20px}
.hot{background:linear-gradient(#fbd9a0,#f0bd62);color:#5a0060;text-align:left}
.hot span{padding-left:43px}
.on th{background:#ffd285;color:#5a0060}
.on td{background:#dbeaf9}
.on td:nth-child(2){background:#0078d7;color:#fff}
.key{color:#00e}
.dimd td{color:#808080}

.status{display:flex;height:22px;flex:none;padding-top:2px;gap:2px;background:#fafafa;font-family:"Noto Sans CJK SC",sans-serif}
.status>span{border:1px solid #d5d5d5;padding:0 1px;line-height:18px;white-space:nowrap;background:linear-gradient(#fff,#f1f1f1)}
.s1{width:148px}.s2{width:78px}.s3{width:98px}.s4{width:48px}.s5{flex:1}

.taskbar{display:flex;height:40px;flex:none;background:linear-gradient(90deg,#060c0f,#06181e 12%,#06151b);color:#fff}
.taskbar>button{width:49px;display:flex;justify-content:center;align-items:center}
.taskbar>button:nth-child(-n+2){width:48px}
.taskbar>button:nth-of-type(3){width:52px}
.find{display:flex;align-items:center;width:150px;height:30px;margin-top:5px;background:#3c3c3c;padding:0 6px 0 3px;gap:4px}
.find input{flex:1;min-width:0;color:#aaa}
.eb{width:20px;height:20px;color:#1593ff}
.edge{color:#0c7fdd}
.taskbar>.run{position:relative}
.run::after{content:"";position:absolute;bottom:0;left:4px;right:4px;height:2px;background:#84b9f0}
.taskbar>.now{width:48px;background:#354348}
.now::after{left:0;right:0}
.tray{display:flex;align-items:center;margin-left:auto;gap:10px;font-size:12px}
.tray .zh{font-size:13px;margin-right:4px}
.tray time{text-align:center;line-height:18px;margin:0 9px 0 8px}
.desk{width:1px;height:40px;background:#555;margin:0 4px 0 9px}

.editor{position:absolute;left:638px;right:-10px;top:59px;bottom:64px;display:flex;flex-direction:column;background:#f0f0f0;box-shadow:0 2px 10px rgba(0,0,0,.4)}
.editor h2{height:30px;flex:none;background:#fff;color:#999;padding-left:8px;line-height:30px;border-bottom:1px solid #eee}
.editor .bar{height:28px;flex:none;padding-left:3px}
.grip{width:2px;height:16px;background:repeating-linear-gradient(#b0b0b0 0 2px,transparent 2px 5px);margin-right:-1px}
.back{color:#3f73cf}
.editor .sep{margin:0 -1px}
.editor .opts{gap:0}
.radios{display:flex;gap:9px;background:#f0f0f0;width:192px;padding-left:5px}
.radios label{display:flex;align-items:center;gap:9px}
.radios input{appearance:none;width:11px;height:11px;border:1px solid #888;border-radius:50%;background:#fff}
.radios input:checked{background:radial-gradient(#000 0 2px,#fff 4px)}
.co{width:31px;padding-left:4px}
.opts .mm{width:35px;padding-left:6px}
.spin{display:flex;width:78px;height:24px;border:1px solid #7a7a7a;background:#f4f4f4;color:#777}
.spin input{flex:1;min-width:0;text-align:right}
.spin>span{width:20px;display:flex;flex-direction:column;justify-content:space-around;align-items:center}
.spin button{border:3px solid transparent;border-bottom-color:#555;border-top:0}
.spin .dn{border-top:3px solid #555;border-bottom:0}
.canvas{flex:1;min-height:0;background:#000;overflow:hidden}
.dims text{fill:#0f0;font:bold 15px "Liberation Mono",monospace;text-anchor:middle}
.ref text{fill:#bbb;font:12px "Liberation Mono",monospace;text-anchor:middle}
.dyn{height:28px;flex:none;padding:2px;border-bottom:1px solid #a0a0a0}
.dyn button{width:58px;height:24px;border:1px solid #0078d7;background:#e0eef8}
.acts{display:flex;justify-content:flex-end;align-items:center;height:41px;flex:none;gap:24px;border-top:1px solid #fff;font-family:"Noto Sans CJK SC",sans-serif}
.acts div,.dbtn{display:flex;gap:15px}
.pb{height:24px;padding:0 6px;background:#e1e1e1;border:1px solid #adadad}
.pb.w{width:72px}
.est{display:flex;height:22px;flex:none;gap:2px;padding-top:1px;border-top:1px solid #fff;font-family:"Noto Sans CJK SC",sans-serif}
.est>span{width:148px;border:1px solid #d5d5d5;padding-left:1px;background:linear-gradient(#fff,#f1f1f1);line-height:18px;white-space:nowrap}
.est>span:last-child{flex:1}

.dialog{position:absolute;left:267px;top:273px;width:411px;border:1px solid #3c8fe0;background:#f0f0f0;box-shadow:0 3px 14px rgba(0,0,0,.45);font-family:"Noto Sans CJK SC",sans-serif}
.dialog header{display:flex;justify-content:space-between;height:25px;align-items:center;background:#fff;padding:0 9px 0 3px;margin-bottom:14px}
fieldset{margin:0 13px 7px;padding:2px 9px 6px 7px;border:1px solid #dcdcdc;min-width:0}
legend{padding:0 2px 0 0;height:16px;white-space:nowrap}
textarea{display:block;width:100%;height:41px;border:1px solid #7a7a7a;background:#fff;resize:none;padding:2px;line-height:12px;overflow:hidden}
textarea:focus{outline:0;border-color:#5a7288}
textarea::selection{background:#0078d7;color:#fff}
.dbtn{justify-content:flex-end;padding:4px 14px 7px}

.ime{position:absolute;right:0;bottom:40px;width:206px;height:22px;display:flex;align-items:center;gap:6px;background:linear-gradient(90deg,transparent 20px,#fff 20px);color:#1f73c9;padding-right:4px}
.ime svg{width:16px;height:16px}
.ime .big{width:28px;height:28px}
.ime b{font-size:15px}
.ball{position:absolute;left:1016px;top:-26px;width:46px;height:46px;border:2px solid #c4c4c4;border-radius:50%;background:#3cc45c;box-shadow:0 2px 6px rgba(0,0,0,.4),inset 0 0 0 1px #239848;color:#fff;font-size:11px;font-weight:700;line-height:16px;padding-top:23px;text-align:center}
.marks{position:absolute;left:0;top:0;width:100%;height:100%;pointer-events:none;fill:none;stroke:#f00;stroke-width:8}
```
FILE: app.js
```js
const spacing = document.getElementById('h');
spacing.focus();
spacing.select();
```
